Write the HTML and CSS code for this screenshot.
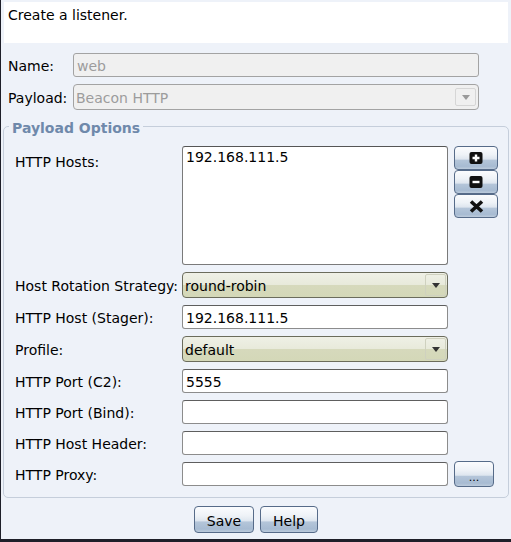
FILE: index.html
```html
<!DOCTYPE html>
<html>
<head>
<meta charset="utf-8">
<link rel="stylesheet" href="styles.css">
</head>
<body>
<div class="window">
  <div class="header">Create a listener.</div>
  <div class="top-form">
    <label class="label">Name:</label>
    <input class="field disabled" type="text" value="web" disabled>
    <label class="label">Payload:</label>
    <div class="combo disabled-combo"><span class="combo-text">Beacon HTTP</span><span class="combo-arrow"><svg width="8" height="5" viewBox="0 0 8 5"><path d="M0 0H8L4 5Z" fill="#9a9a9a"/></svg></span></div>
  </div>
  <fieldset class="options">
    <legend class="legend">Payload Options</legend>
    <div class="grid">
      <label class="label top">HTTP Hosts:</label>
      <textarea class="area">192.168.111.5</textarea>
      <div class="side-buttons">
        <button class="btn side"><svg width="14" height="12" viewBox="0 0 14 12"><rect x="0.5" y="0" width="13" height="12" rx="2" fill="#111"/><path d="M7 2.5V9.5M3.5 6H10.5" stroke="#fff" stroke-width="2.4"/></svg></button>
        <button class="btn side"><svg width="14" height="12" viewBox="0 0 14 12"><rect x="0.5" y="0" width="13" height="12" rx="2" fill="#111"/><path d="M3.5 6H10.5" stroke="#fff" stroke-width="2.4"/></svg></button>
        <button class="btn side"><svg width="15" height="13" viewBox="0 0 15 13"><path d="M2 1.5L13 11.5M13 1.5L2 11.5" stroke="#111" stroke-width="3.6"/></svg></button>
      </div>

      <label class="label">Host Rotation Strategy:</label>
      <div class="combo"><span class="combo-text">round-robin</span><span class="combo-arrow"><svg width="8" height="5" viewBox="0 0 8 5"><path d="M0 0H8L4 5Z" fill="#333"/></svg></span></div>
      <div></div>

      <label class="label">HTTP Host (Stager):</label>
      <input class="field" type="text" value="192.168.111.5">
      <div></div>

      <label class="label">Profile:</label>
      <div class="combo"><span class="combo-text">default</span><span class="combo-arrow"><svg width="8" height="5" viewBox="0 0 8 5"><path d="M0 0H8L4 5Z" fill="#333"/></svg></span></div>
      <div></div>

      <label class="label">HTTP Port (C2):</label>
      <input class="field" type="text" value="5555">
      <div></div>

      <label class="label">HTTP Port (Bind):</label>
      <input class="field" type="text" value="">
      <div></div>

      <label class="label">HTTP Host Header:</label>
      <input class="field" type="text" value="">
      <div></div>

      <label class="label">HTTP Proxy:</label>
      <input class="field" type="text" value="">
      <button class="btn dots">...</button>
    </div>
  </fieldset>
  <div class="actions">
    <button class="btn action save">Save</button>
    <button class="btn action help">Help</button>
  </div>
</div>
</body>
</html>
```

FILE: styles.css
```css
* {
  box-sizing: border-box;
}

body {
  margin: 0;
  background: #eef2f9;
  font-family: "DejaVu Sans", "Noto Sans", sans-serif;
  font-size: 14px;
  color: #000;
}

.window {
  width: 511px;
  height: 542px;
  border-left: 1px solid #1e1f29;
  border-bottom: 3px solid #1e1f29;
  padding-top: 2px;
  display: flex;
  flex-direction: column;
}

.header {
  margin: 0 3px;
  height: 41px;
  background: #fff;
  padding: 5px 4px;
  line-height: 16px;
}

.top-form {
  display: grid;
  grid-template-columns: 65px 406px;
  row-gap: 7px;
  align-items: center;
  margin-top: 10px;
  padding-left: 7px;
}

.label {
  white-space: nowrap;
  line-height: 16px;
  padding-top: 2px;
}

.label.top {
  align-self: start;
  padding-top: 8px;
}

.field {
  height: 24px;
  width: 100%;
  border: 1px solid #8c8c8c;
  border-top-color: #5e5e5e;
  border-radius: 3px;
  background: #fff;
  padding: 2px 3px 0;
  font: inherit;
  color: #000;
  outline: none;
}

.field.disabled {
  background: #f0f0f0;
  border-color: #a3a3a3;
  color: #9c9c9c;
}

.combo {
  height: 26px;
  display: flex;
  align-items: stretch;
  border: 1px solid #6b6c5c;
  border-radius: 4px;
  background: linear-gradient(to bottom, #eff0e6 0%, #e8eadb 48%, #d6d9bc 52%, #d4d8b8 100%);
  overflow: hidden;
}

.combo-text {
  flex: 1;
  padding: 5px 2px 0;
  line-height: 16px;
}

.combo-arrow {
  width: 21px;
  margin: 1px 1px 1px 0;
  border: 1px solid #cfd1bf;
  border-radius: 2px;
  display: flex;
  align-items: center;
  justify-content: center;
}

.disabled-combo {
  background: #f0f0f0;
  border-color: #a3a3a3;
  color: #9c9c9c;
}

.disabled-combo .combo-arrow {
  border-color: #d6d6d6;
  margin: 3px 2px 3px 0;
}

.options {
  margin: 6px 2px 0 2px;
  padding: 10px 9px 11px 11px;
  border: 1px solid #c5cedb;
  border-radius: 5px;
  min-width: 0;
}

.legend {
  margin-left: -6px;
  padding: 4px 3px 0;
  font-weight: bold;
  line-height: 16px;
  color: #6f89ab;
}

.grid {
  display: grid;
  grid-template-columns: 167px 266px 50px;
  row-gap: 7px;
  align-items: center;
}

.area {
  height: 119px;
  width: 100%;
  resize: none;
  border: 1px solid #7a7a7a;
  border-top-color: #555;
  border-radius: 3px;
  background: #fff;
  padding: 2px 3px;
  font: inherit;
  line-height: 16px;
  color: #000;
  outline: none;
  display: block;
}

.side-buttons {
  align-self: start;
  margin-left: 6px;
  display: flex;
  flex-direction: column;
}

.btn {
  border: 1px solid #566b89;
  border-radius: 4px;
  background: linear-gradient(to bottom, #fbfcfe 0%, #eef2f7 35%, #dee6ef 55%, #b4c5d9 60%, #a7bbd2 88%, #bccbdc 100%);
  font: inherit;
  color: #000;
  padding: 0;
  display: flex;
  align-items: center;
  justify-content: center;
}

.btn.side {
  width: 44px;
  height: 24px;
}

.btn.dots {
  width: 40px;
  height: 26px;
  margin: -1px 0 -1px 6px;
  font-size: 11px;
  line-height: 1;
  padding-top: 6px;
}

.actions {
  display: flex;
  justify-content: center;
  gap: 6px;
  margin-top: 8px;
}

.btn.action {
  height: 27px;
  padding-top: 2px;
}

.btn.save {
  width: 60px;
}

.btn.help {
  width: 58px;
}
```
